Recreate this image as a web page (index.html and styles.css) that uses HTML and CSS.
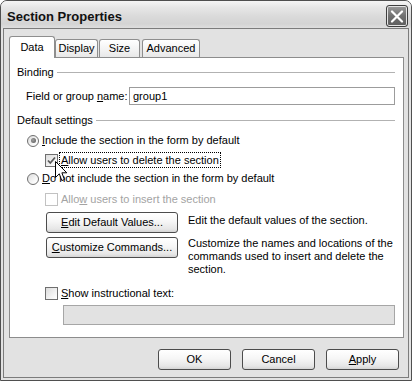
FILE: index.html
```html
<!DOCTYPE html>
<html>
<head>
<meta charset="utf-8">
<title>Section Properties</title>
<link rel="stylesheet" href="styles.css">
</head>
<body>
<div class="window">
  <div class="titlebar">
    <span class="title">Section Properties</span>
    <div class="close">
      <svg width="14" height="13" viewBox="0 0 14 13"><path d="M2 1.5 L12 11.5 M12 1.5 L2 11.5" stroke="#fff" stroke-width="2.2" stroke-linecap="round" fill="none"/></svg>
    </div>
  </div>
  <div class="body">
    <div class="tabs">
      <div class="tab tab-data active">Data</div>
      <div class="tab tab-display">Display</div>
      <div class="tab tab-size">Size</div>
      <div class="tab tab-advanced">Advanced</div>
    </div>
    <div class="panel">
      <div class="group">Binding</div>
      <div class="field-row">
        <span class="field-label">Field or group <u>n</u>ame:</span>
        <div class="input">group1</div>
      </div>
      <div class="group group-defaults">Default settings</div>
      <div class="radio-row row-include">
        <span class="radio checked"><span class="dot"></span></span>
        <span><u>I</u>nclude the section in the form by default</span>
      </div>
      <div class="check-row row-delete">
        <span class="check">
          <svg width="11" height="11" viewBox="0 0 11 11"><path d="M2 5.5 L4.3 8 L9 2.5" stroke="#5a5a5a" stroke-width="1.8" fill="none"/></svg>
        </span>
        <span class="focus"><u>A</u>llow users to delete the section</span>
      </div>
      <div class="radio-row row-exclude">
        <span class="radio"></span>
        <span><u>D</u>o not include the section in the form by default</span>
      </div>
      <div class="check-row row-insert disabled">
        <span class="check"></span>
        <span class="label">Allo<u>w</u> users to insert the section</span>
      </div>
      <div class="cmd-row row-edit">
        <button class="btn cmd-btn"><span><u>E</u>dit Default Values...</span></button>
        <div class="desc desc-edit">Edit the default values of the section.</div>
      </div>
      <div class="cmd-row row-customize">
        <button class="btn cmd-btn"><span><u>C</u>ustomize Commands...</span></button>
        <div class="desc">Customize the names and locations of the<br>commands used to insert and delete the<br>section.</div>
      </div>
      <div class="check-row row-show">
        <span class="check"></span>
        <span class="label"><u>S</u>how instructional text:</span>
      </div>
      <div class="textbox"></div>
    </div>
    <div class="actions">
      <button class="btn act-btn">OK</button>
      <button class="btn act-btn">Cancel</button>
      <button class="btn act-btn"><span><u>A</u>pply</span></button>
    </div>
  </div>
  <svg class="cursor" width="13" height="21" viewBox="0 0 13 21">
    <path d="M0.5 0.5 L0.5 16.5 L4.3 12.8 L6.8 19.6 L9.4 18.5 L6.9 11.8 L11.8 11.8 Z" fill="#fff" stroke="#000" stroke-width="1" stroke-linejoin="miter"/>
  </svg>
</div>
</body>
</html>
```

FILE: styles.css
```css
html, body {
  margin: 0;
  padding: 0;
  background: #ffffff;
}

body {
  font-family: "Liberation Sans", Arial, sans-serif;
  font-size: 11px;
  line-height: 13px;
  color: #000;
}

u {
  text-decoration: underline;
  text-underline-offset: 1px;
}

.window {
  position: relative;
  width: 412px;
  height: 381px;
  box-sizing: border-box;
  border: 1px solid #4f4f4f;
  border-radius: 7px 7px 0 0;
  background: #e2e2e2;
  display: flex;
  flex-direction: column;
}

.titlebar {
  height: 27px;
  flex: none;
  display: flex;
  justify-content: space-between;
  align-items: flex-start;
  padding: 0 3px 0 6px;
  border-radius: 6px 6px 0 0;
  background: linear-gradient(#f5f5f5, #e6e6e6 25%, #d9d9d9 60%, #d4d4d4 85%, #dedede);
}

.title {
  font-weight: bold;
  font-size: 13px;
  line-height: 15px;
  padding-top: 8px;
  color: #111;
}

.close {
  margin-top: 4px;
  width: 22px;
  height: 22px;
  box-sizing: border-box;
  border: 1px solid #3e3e3e;
  border-radius: 3px;
  background: linear-gradient(#9c9c9c, #707070 50%, #5e5e5e);
  box-shadow: inset 0 0 0 1px #e4e4e4;
  display: flex;
  align-items: center;
  justify-content: center;
}

.body {
  flex: 1;
  margin: 0 2px 2px;
  border: 1px solid #7c7c7c;
  padding: 7px 4px 7px 5px;
  display: flex;
  flex-direction: column;
}

.tabs {
  height: 21px;
  display: flex;
  align-items: flex-end;
}

.tab {
  box-sizing: border-box;
  height: 18px;
  border: 1px solid #8e8e8e;
  border-bottom: none;
  border-radius: 3px 3px 0 0;
  background: linear-gradient(#ffffff, #f2f2f2 60%, #e8e8e8);
  text-align: center;
  padding-top: 2px;
}

.tab-data { width: 46px; }
.tab-display { width: 43px; }
.tab-size { width: 41px; margin-left: 1px; }
.tab-advanced { width: 58px; margin-left: 2px; }

.tab.active {
  position: relative;
  z-index: 1;
  height: 22px;
  margin-bottom: -1px;
  background: #fff;
  padding-top: 4px;
}

.panel {
  border: 1px solid #8c8c8c;
  background: #fff;
  padding: 8px 8px 12px 7px;
  display: flex;
  flex-direction: column;
}

.group {
  height: 13px;
  display: flex;
  align-items: center;
  white-space: nowrap;
}

.group::after {
  content: "";
  flex: 1;
  height: 1px;
  background: #b2b2b2;
  margin-left: 3px;
}

.field-row {
  margin-top: 8px;
  margin-left: 9px;
  height: 18px;
  display: flex;
  align-items: center;
}

.field-label {
  width: 103px;
  flex: none;
}

.input {
  flex: 1;
  height: 18px;
  box-sizing: border-box;
  border: 1px solid #9c9c9c;
  padding: 1px 3px;
  line-height: 14px;
}

.group-defaults {
  margin-top: 9px;
}

.radio-row {
  height: 13px;
  display: flex;
  align-items: center;
  margin-left: 10px;
  white-space: nowrap;
}

.row-include { margin-top: 7px; }
.row-exclude { margin-top: 4px; }

.radio {
  width: 12px;
  height: 12px;
  box-sizing: border-box;
  border: 1px solid #6f6f6f;
  border-radius: 50%;
  background: linear-gradient(135deg, #dcdcdc, #fafafa 70%, #fff);
  margin-right: 3px;
  display: flex;
  align-items: center;
  justify-content: center;
  flex: none;
}

.radio .dot {
  width: 5px;
  height: 5px;
  border-radius: 50%;
  background: radial-gradient(circle at 40% 40%, #a0a0a0, #555);
}

.check-row {
  display: flex;
  align-items: center;
  margin-left: 28px;
  white-space: nowrap;
}

.check {
  width: 13px;
  height: 13px;
  box-sizing: border-box;
  border: 1px solid #6f6f6f;
  background: linear-gradient(135deg, #dcdcdc, #f6f6f6 70%, #fff);
  flex: none;
  display: flex;
  align-items: center;
  justify-content: center;
}

.row-delete {
  margin-top: 5px;
  height: 16px;
}

.focus {
  margin-left: 1px;
  height: 16px;
  box-sizing: border-box;
  border: 1px dotted #000;
  padding: 0 1px;
  line-height: 14px;
}

.check-row .label {
  margin-left: 3px;
}

.row-insert {
  margin-top: 8px;
  height: 13px;
}

.disabled .check {
  border-color: #c2c2c2;
  background: #fff;
}

.disabled .label {
  color: #a3a3a3;
}

.cmd-row {
  display: flex;
  align-items: flex-start;
  margin-left: 29px;
}

.row-edit { margin-top: 6px; }
.row-customize { margin-top: 4px; }

.btn {
  box-sizing: border-box;
  height: 21px;
  border: 1px solid #4c4c4c;
  border-radius: 3px;
  background: linear-gradient(#ffffff, #f6f6f6 45%, #e6e6e6 85%, #d4d4d4);
  font: inherit;
  color: #000;
  padding: 0;
  margin: 0;
  display: flex;
  align-items: center;
  justify-content: center;
  flex: none;
}

.cmd-btn {
  width: 132px;
}

.desc {
  margin-left: 10px;
  white-space: nowrap;
}

.desc-edit {
  padding-top: 2px;
}

.row-show {
  margin-top: 11px;
  height: 13px;
}

.textbox {
  margin-top: 5px;
  margin-left: 46px;
  height: 20px;
  box-sizing: border-box;
  border: 1px solid #a6a6a6;
  background: #e2e2e2;
}

.actions {
  margin-top: 11px;
  display: flex;
  justify-content: flex-end;
  gap: 11px;
  padding-right: 5px;
}

.act-btn {
  width: 73px;
}

.cursor {
  position: absolute;
  left: 54px;
  top: 160px;
  z-index: 5;
}
```
